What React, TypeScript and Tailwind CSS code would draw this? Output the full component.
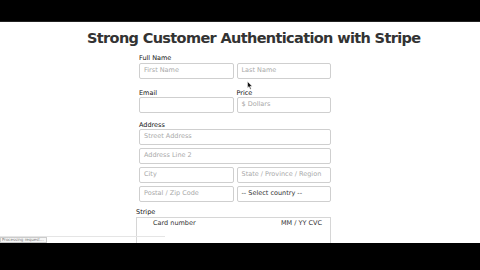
const font = { fontFamily: '"DejaVu Sans", Verdana, sans-serif' };

function Field({ placeholder, dark = false }: { placeholder?: string; dark?: boolean }) {
  return (
    <div
      className={`flex h-[16px] items-center rounded-[2px] border border-[#cfcfcf] bg-white px-[4px] text-[6.5px] ${
        dark ? "text-[#333]" : "text-[#a9a9a9]"
      }`}
    >
      {placeholder}
    </div>
  );
}

function Label({ children, className = "" }: { children: string; className?: string }) {
  return <p className={`text-[6.5px] leading-[7px] text-[#111] ${className}`}>{children}</p>;
}

export default function App() {
  return (
    <div className="flex h-[270px] w-[480px] flex-col bg-black" style={font}>
      <div className="h-[22px] shrink-0 border-b border-[#222]" />
      <div className="relative flex h-[221px] shrink-0 flex-col overflow-hidden bg-white">
        <h1 className="mt-[7px] pl-[87px] text-[14.5px] font-bold leading-[18px] tracking-[-0.65px] text-[#333]">
          Strong Customer Authentication with Stripe
        </h1>
        <div className="ml-[139px] mt-[8px] w-[192px]">
          <Label>Full Name</Label>
          <div className="mt-[1px] grid grid-cols-2 gap-[3px]">
            <Field placeholder="First Name" />
            <Field placeholder="Last Name" />
          </div>
          <div className="mt-[11px] grid grid-cols-2 gap-[3px]">
            <div>
              <Label>Email</Label>
              <Field />
            </div>
            <div>
              <Label>Price</Label>
              <Field placeholder="$ Dollars" />
            </div>
          </div>
          <Label className="mt-[9px]">Address</Label>
          <div className="flex flex-col gap-[3px]">
            <Field placeholder="Street Address" />
            <Field placeholder="Address Line 2" />
            <div className="grid grid-cols-2 gap-[3px]">
              <Field placeholder="City" />
              <Field placeholder="State / Province / Region" />
            </div>
            <div className="grid grid-cols-2 gap-[3px]">
              <Field placeholder="Postal / Zip Code" />
              <Field dark placeholder="-- Select country --" />
            </div>
          </div>
        </div>
        <div className="ml-[136px] mt-[7px] w-[195px]">
          <Label>Stripe</Label>
          <div className="mt-[1px] flex h-[30px] justify-between border border-[#d6d6d6] px-[16px] pt-[1px] text-[6.5px] text-[#333]">
            <span>Card number</span>
            <span className="-mr-[8px]">MM / YY CVC</span>
          </div>
        </div>
        <div className="absolute bottom-0 left-0 flex h-[7px] w-[165px] items-end border-t border-[#e5e5e5]">
          <div className="h-[6px] w-[47px] border border-[#ccc] bg-[#f6f6f6] px-[1px] text-[4px] leading-[4px] text-[#777]">
            Processing request...
          </div>
        </div>
        <svg className="absolute left-[247px] top-[59px]" width="6" height="9" viewBox="0 0 6 9">
          <path d="M0.5 0.5 L0.5 7 L2 5.6 L3.2 8.3 L4.2 7.9 L3.1 5.3 L5.2 5.3 Z" fill="#111" stroke="#fff" strokeWidth="0.5" />
        </svg>
      </div>
      <div className="flex-1 bg-black" />
    </div>
  );
}
